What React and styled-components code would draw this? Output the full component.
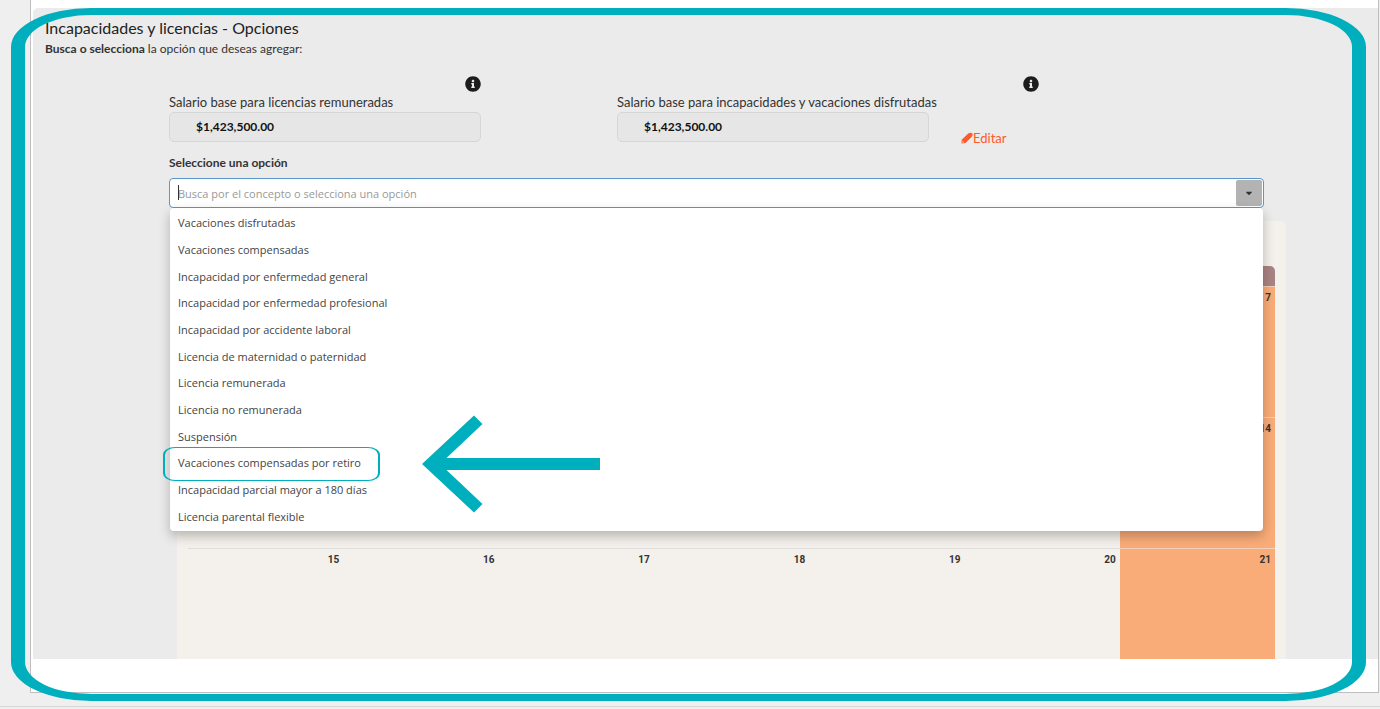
import styled, { createGlobalStyle } from "styled-components";
import { FaCaretDown, FaInfoCircle } from "react-icons/fa";

const options = [
  "Vacaciones disfrutadas",
  "Vacaciones compensadas",
  "Incapacidad por enfermedad general",
  "Incapacidad por enfermedad profesional",
  "Incapacidad por accidente laboral",
  "Licencia de maternidad o paternidad",
  "Licencia remunerada",
  "Licencia no remunerada",
  "Suspensión",
  "Vacaciones compensadas por retiro",
  "Incapacidad parcial mayor a 180 días",
  "Licencia parental flexible",
];

const highlighted = "Vacaciones compensadas por retiro";

// only the days that stay visible while the list is open
const weeks = [
  ["", "", "", "", "", "", 7],
  ["", "", "", "", "", "", 14],
  [15, 16, 17, 18, 19, 20, 21],
];

const SalaryField = ({ id, label }) => (
  <StyledField>
    <StyledLabel htmlFor={id}>{label}</StyledLabel>
    <StyledSalaryInput id={id} type="text" value="$1,423,500.00" readOnly />
  </StyledField>
);

const Calendar = () => (
  <StyledCalendar>
    <StyledTable>
      <thead>
        <tr>
          {weeks[0].map((day, i) => (
            <StyledWeekday key={i} />
          ))}
        </tr>
      </thead>
      <tbody>
        {weeks.map((week) => (
          <tr key={week[6]}>
            {week.map((day, i) => (
              <StyledDay key={i} $sunday={i === 6}>
                {day}
              </StyledDay>
            ))}
          </tr>
        ))}
      </tbody>
    </StyledTable>
  </StyledCalendar>
);

const Arrow = () => (
  <StyledArrow viewBox="0 0 178 98" aria-hidden="true">
    <path
      fill="#00afbd"
      d="M0 49 52 0.5 60.5 9 24.5 43H178V55H24.5L60.5 89 52 97.5Z"
    />
  </StyledArrow>
);

const Concept = () => (
  <StyledConcept>
    <StyledConceptLabel htmlFor="concepto">
      Seleccione una opción
    </StyledConceptLabel>
    <StyledCombo>
      <StyledCaret />
      <StyledComboInput
        id="concepto"
        type="text"
        role="combobox"
        aria-expanded="true"
        aria-controls="conceptos"
        placeholder="Busca por el concepto o selecciona una opción"
      />
      <StyledComboButton type="button" aria-label="Abrir lista">
        <FaCaretDown size={10} />
      </StyledComboButton>
      <StyledMenu id="conceptos" role="listbox">
        {options.map((option) => (
          <StyledOption key={option} role="option">
            {option === highlighted && <StyledHighlight />}
            {option}
            {option === highlighted && <Arrow />}
          </StyledOption>
        ))}
      </StyledMenu>
    </StyledCombo>
  </StyledConcept>
);

const App = () => {
  return (
    <>
      <GlobalStyle />
      <StyledPage>
        <StyledSheet>
          <StyledPanel>
            <StyledTitle>Incapacidades y licencias - Opciones</StyledTitle>
            <StyledSubtitle>
              <b>Busca o selecciona</b> la opción que deseas agregar:
            </StyledSubtitle>
            <StyledContent>
              <StyledSalaries>
                <StyledSalary>
                  <StyledInfo type="button" aria-label="Información">
                    <FaInfoCircle size={16} />
                  </StyledInfo>
                  <SalaryField
                    id="licencias"
                    label="Salario base para licencias remuneradas"
                  />
                </StyledSalary>
                <StyledSalary $wide>
                  <StyledInfo type="button" aria-label="Información">
                    <FaInfoCircle size={16} />
                  </StyledInfo>
                  <SalaryField
                    id="incapacidades"
                    label="Salario base para incapacidades y vacaciones disfrutadas"
                  />
                  <StyledEdit href="#editar">
                    <svg width="12" height="12" viewBox="0 0 12 12">
                      <path
                        fill="#ff5a2b"
                        d="M0.5 11.5 0.7 7.8 7.2 1.4Q9.6 0 11.2 1.2 12.2 2.8 10.8 4.8L4.6 10.9Z"
                      />
                      <path fill="#ebebeb" d="M1.6 8.9 3.2 10.3 1.5 10.7Z" />
                    </svg>
                    Editar
                  </StyledEdit>
                </StyledSalary>
              </StyledSalaries>
              <Concept />
              <Calendar />
            </StyledContent>
          </StyledPanel>
        </StyledSheet>
        <StyledFrame />
      </StyledPage>
    </>
  );
};

const GlobalStyle = createGlobalStyle`
  * {
    box-sizing: border-box;
  }

  body {
    margin: 0;
    background-color: #efefef;
    font-family: Lato, sans-serif;
    color: #333333;
  }

  button,
  input {
    font-family: inherit;
  }
`;

const StyledPage = styled.div`
  position: relative;
  padding: 0 1px 13px 30px;
  border-bottom: 1px solid #d6d6d6;
`;

const StyledSheet = styled.div`
  padding: 8px 0 33px 2px;
  background-color: white;
  border: 1px solid #bfbfbf;
  border-top: none;
`;

const StyledPanel = styled.div`
  height: 651px;
  padding: 10px 0 0 12px;
  background-color: #ebebeb;
  border-radius: 5px 0 0 0;
  overflow: hidden;
`;

const StyledTitle = styled.h1`
  margin: 0;
  font-size: 16px;
  font-weight: 400;
  line-height: 20px;
  color: #222222;
`;

const StyledSubtitle = styled.p`
  margin: 0;
  font-size: 12px;
  line-height: 22px;
`;

const StyledContent = styled.div`
  padding: 16px 114px 0 124px;
`;

const StyledSalaries = styled.div`
  display: grid;
  grid-template-columns: 312fr 422fr;
  column-gap: 136px;
  margin-right: 225px;
`;

const StyledSalary = styled.div`
  display: grid;
  grid-template-columns: ${(props) =>
    props.$wide ? "minmax(0, 312fr) 32fr 78fr" : "1fr"};
  row-gap: 2px;
`;

const StyledInfo = styled.button`
  grid-column: 1 / -1;
  justify-self: end;
  display: flex;
  padding: 0;
  border: none;
  background: none;
  color: #1c1c1c;
`;

const StyledField = styled.div`
  display: flex;
  flex-direction: column;
`;

const StyledLabel = styled.label`
  margin-bottom: 2px;
  font-size: 13px;
  line-height: 16px;
  white-space: nowrap;
`;

const StyledSalaryInput = styled.input`
  width: 100%;
  height: 30px;
  padding: 0 26px 2px;
  border: 1px solid #d6d6d6;
  border-radius: 5px;
  background-color: #e6e6e6;
  color: #111111;
  font-size: 12px;
  font-weight: 700;
`;

const StyledEdit = styled.a`
  grid-column: 3;
  align-self: end;
  display: flex;
  align-items: center;
  margin-bottom: -4px;
  color: #ff5a2b;
  font-size: 13px;
  line-height: 16px;
  text-decoration: none;
`;

const StyledConcept = styled.div`
  margin-top: 12px;
`;

const StyledConceptLabel = styled.label`
  display: block;
  margin-bottom: 6px;
  font-size: 12px;
  font-weight: 700;
  line-height: 18px;
`;

const StyledCombo = styled.div`
  position: relative;
  display: flex;
  height: 30px;
  padding: 1px;
  border: 1px solid #5897cc;
  border-radius: 4px;
  background-color: white;
  font-family: "Open Sans", sans-serif;
`;

const StyledCaret = styled.span`
  position: absolute;
  top: 6px;
  left: 8px;
  width: 1px;
  height: 15px;
  background-color: #333333;
`;

const StyledComboInput = styled.input`
  flex: 1;
  padding: 0 7px;
  border: none;
  outline: none;
  background: none;
  font-size: 11px;

  &::placeholder {
    color: #999999;
  }
`;

const StyledComboButton = styled.button`
  display: flex;
  justify-content: center;
  align-items: center;
  width: 26px;
  padding: 0;
  border: none;
  border-radius: 2px;
  background-color: #b3b3b3;
  color: #333333;
`;

const StyledMenu = styled.ul`
  position: absolute;
  top: 29px;
  left: 0;
  right: 0;
  z-index: 1;
  display: grid;
  grid-auto-rows: 1fr;
  height: 323px;
  margin: 0;
  padding: 2px 0 1px;
  border-radius: 4px;
  background-color: white;
  box-shadow: 0 5px 12px rgba(0, 0, 0, 0.25);
  list-style: none;
`;

const StyledOption = styled.li`
  position: relative;
  display: flex;
  align-items: center;
  padding: 0 8px;
  font-size: 11px;
  line-height: 16px;
  color: #444444;
`;

const StyledHighlight = styled.span`
  position: absolute;
  top: -3px;
  left: -7px;
  width: 217px;
  height: 34px;
  border: 1px solid #00afbd;
  border-width: 1px 2px;
  border-radius: 12px / 8px;
`;

const StyledArrow = styled.svg`
  position: absolute;
  top: -35px;
  left: 252px;
  width: 178px;
  height: 98px;
`;

const StyledCalendar = styled.div`
  margin: 13px -22px 0 8px;
  padding: 45px 11px 0;
  border-radius: 5px;
  background-color: #f4f0eb;
`;

const StyledTable = styled.table`
  width: 100%;
  table-layout: fixed;
  border-collapse: separate;
  border-spacing: 0;
  font-family: Roboto, sans-serif;
`;

const StyledWeekday = styled.th`
  height: 20px;
  padding: 0;
  background-color: #ab8383;

  &:last-child {
    border-radius: 0 5px 0 0;
  }
`;

const StyledDay = styled.td`
  height: 131px;
  padding: 5px 4px;
  border-top: 1px solid ${(props) => (props.$sunday ? "#efd0b8" : "#dddddd")};
  background-color: ${(props) => (props.$sunday ? "#faac78" : "transparent")};
  font-size: 10px;
  font-weight: 700;
  line-height: 12px;
  text-align: right;
  vertical-align: top;
`;

/* outline around the whole screen */
const StyledFrame = styled.div`
  position: absolute;
  top: 8px;
  left: 11px;
  right: 14px;
  bottom: 5px;
  z-index: 2;
  border: solid #00afbd;
  border-width: 7px 14px;
  border-radius: 80px / 39px;
  pointer-events: none;
`;

export default App;
